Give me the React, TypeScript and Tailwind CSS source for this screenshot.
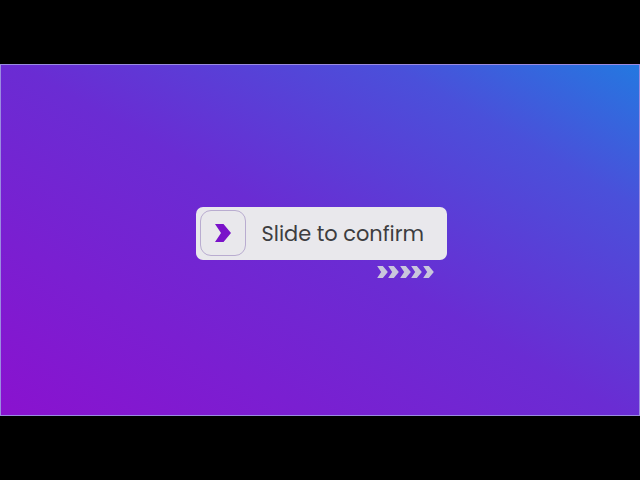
function Chevron({ className }: { className?: string }) {
  return (
    <svg viewBox="0 0 16 18" className={className}>
      <path d="M0 0h8.5l7.5 9-7.5 9H0l6-9z" fill="currentColor" />
    </svg>
  );
}

export default function App() {
  return (
    <div className="w-[640px] h-[480px] bg-black flex flex-col pt-[64px]">
      <div className="h-[352px] w-full border border-[#9a8be0] flex flex-col items-center justify-center bg-[linear-gradient(30deg,#8a12cf_0%,#6a2cd3_50%,#4a50da_80%,#2478e0_100%)]">
        <div className="flex flex-col items-end ml-[2px] mt-[4px]">
          <div className="w-[251px] h-[53px] bg-[#e9e8ec] rounded-[7px] flex items-center pl-[4px] gap-[16px]">
            <div className="w-[46px] h-[46px] rounded-[11px] border border-[#b9acd0] flex items-center justify-center">
              <Chevron className="w-[16px] h-[18px] text-[#7a12c9] ml-[1px]" />
            </div>
            <span className="text-[20.9px] mt-[2px] text-[#3d3d40] font-['Poppins','Open_Sans',sans-serif]">
              Slide to confirm
            </span>
          </div>
          <div className="flex mt-[6px] mr-[13px] gap-[0.5px]">
            {[0, 1, 2, 3, 4].map((i) => (
              <Chevron key={i} className="w-[11px] h-[12px] text-[#c9c6dc]" />
            ))}
          </div>
        </div>
      </div>
    </div>
  );
}
